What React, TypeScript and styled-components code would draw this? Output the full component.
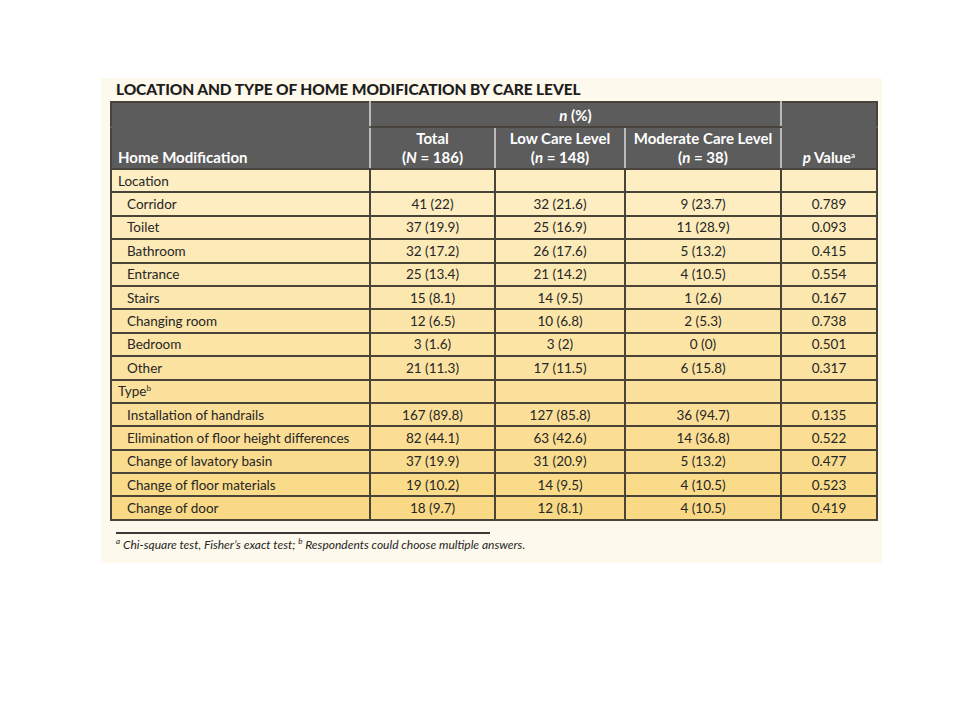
import React from "react";
import styled, { createGlobalStyle } from "styled-components";

const Global = createGlobalStyle`
  html, body { margin: 0; padding: 0; background: #ffffff; }
  body { font-family: "Lato", "Open Sans", sans-serif; }
`;

const Page = styled.div`
  width: 960px;
  height: 720px;
  padding: 78px 0 0 101px;
  box-sizing: border-box;
`;

const Panel = styled.div`
  width: 781px;
  height: 485px;
  background: #fdf9ec;
  box-sizing: border-box;
  padding: 2px 0 0 9px;
  display: flex;
  flex-direction: column;
`;

const Title = styled.div`
  font-family: "Lato", sans-serif;
  font-weight: 900;
  font-size: 15.5px;
  color: #1e1e1e;
  padding-left: 6px;
  height: 21px;
  line-height: 18px;
  letter-spacing: -0.1px;
  white-space: nowrap;
`;

const Table = styled.table`
  border-collapse: collapse;
  width: 766px;
  table-layout: fixed;
  font-family: "Lato", sans-serif;
  font-size: 13.5px;
  color: #262626;
`;

const HeadCell = styled.th<{ $align?: string; $sepRight?: boolean; $sepTop?: boolean }>`
  background: #5c5c5c;
  color: #ffffff;
  font-weight: 700;
  font-size: 15px;
  line-height: 19px;
  text-align: ${(p) => p.$align || "center"};
  vertical-align: bottom;
  padding: 0 6px 1px 6px;
  white-space: nowrap;
  border: 2px solid #48443d;
  ${(p) => (p.$sepRight ? "border-right: 2px solid #b9b9b9;" : "")}
  ${(p) => (p.$sepTop ? "border-top: 2px solid #b9b9b9;" : "")}
`;

const HeadRow = styled.tr<{ $h: number }>`
  height: ${(p) => p.$h}px;
`;

const BodyRow = styled.tr<{ $bg: string }>`
  height: 23.4px;
  background: ${(p) => p.$bg};
`;

const Cell = styled.td<{ $indent?: boolean; $left?: boolean }>`
  border: 2px solid #4a4438;
  padding: 0 6px;
  padding-left: ${(p) => (p.$indent ? "15px" : "6px")};
  text-align: ${(p) => (p.$left || p.$indent ? "left" : "center")};
  line-height: 18px;
  white-space: nowrap;
`;

const Footer = styled.div`
  margin-top: 11px;
  padding-left: 6px;
  display: flex;
  flex-direction: column;
`;

const Rule = styled.div`
  width: 374px;
  height: 2px;
  background: #3a3a3a;
`;

const Note = styled.div`
  margin-top: 3px;
  font-family: "Lato", sans-serif;
  font-style: italic;
  font-size: 12px;
  color: #262626;
  line-height: 15px;
  white-space: nowrap;
`;

const Sup = styled.sup`
  font-size: 8px;
  vertical-align: 5px;
  line-height: 0;
`;

type Row = { label: string; cells?: string[]; section?: boolean; sup?: string };

const rows: Row[] = [
  { label: "Location", section: true },
  { label: "Corridor", cells: ["41 (22)", "32 (21.6)", "9 (23.7)", "0.789"] },
  { label: "Toilet", cells: ["37 (19.9)", "25 (16.9)", "11 (28.9)", "0.093"] },
  { label: "Bathroom", cells: ["32 (17.2)", "26 (17.6)", "5 (13.2)", "0.415"] },
  { label: "Entrance", cells: ["25 (13.4)", "21 (14.2)", "4 (10.5)", "0.554"] },
  { label: "Stairs", cells: ["15 (8.1)", "14 (9.5)", "1 (2.6)", "0.167"] },
  { label: "Changing room", cells: ["12 (6.5)", "10 (6.8)", "2 (5.3)", "0.738"] },
  { label: "Bedroom", cells: ["3 (1.6)", "3 (2)", "0 (0)", "0.501"] },
  { label: "Other", cells: ["21 (11.3)", "17 (11.5)", "6 (15.8)", "0.317"] },
  { label: "Type", section: true, sup: "b" },
  { label: "Installation of handrails", cells: ["167 (89.8)", "127 (85.8)", "36 (94.7)", "0.135"] },
  { label: "Elimination of floor height differences", cells: ["82 (44.1)", "63 (42.6)", "14 (36.8)", "0.522"] },
  { label: "Change of lavatory basin", cells: ["37 (19.9)", "31 (20.9)", "5 (13.2)", "0.477"] },
  { label: "Change of floor materials", cells: ["19 (10.2)", "14 (9.5)", "4 (10.5)", "0.523"] },
  { label: "Change of door", cells: ["18 (9.7)", "12 (8.1)", "4 (10.5)", "0.419"] },
];

const mix = (t: number) => {
  const a = [253, 238, 196];
  const b = [250, 217, 134];
  const c = a.map((v, i) => Math.round(v + (b[i] - v) * t));
  return `rgb(${c[0]}, ${c[1]}, ${c[2]})`;
};

export default function App() {
  return (
    <>
      <Global />
      <Page>
        <Panel>
          <Title>LOCATION AND TYPE OF HOME MODIFICATION BY CARE LEVEL</Title>
          <Table>
            <colgroup>
              <col style={{ width: 259 }} />
              <col style={{ width: 125 }} />
              <col style={{ width: 130 }} />
              <col style={{ width: 156 }} />
              <col style={{ width: 96 }} />
            </colgroup>
            <thead>
              <HeadRow $h={25}>
                <HeadCell $sepRight style={{ borderBottomColor: "#5c5c5c" }} />
                <HeadCell colSpan={3} $sepRight>
                  <i>n</i> (%)
                </HeadCell>
                <HeadCell style={{ borderBottomColor: "#5c5c5c" }} />
              </HeadRow>
              <HeadRow $h={42}>
                <HeadCell $align="left" $sepRight style={{ borderTopColor: "#b9b9b9" }}>
                  Home Modification
                </HeadCell>
                <HeadCell $sepRight $sepTop>
                  Total
                  <br />(<i>N</i> = 186)
                </HeadCell>
                <HeadCell $sepRight $sepTop>
                  Low Care Level
                  <br />(<i>n</i> = 148)
                </HeadCell>
                <HeadCell $sepRight $sepTop>
                  Moderate Care Level
                  <br />(<i>n</i> = 38)
                </HeadCell>
                <HeadCell $sepTop>
                  <i>p</i> Value<Sup>a</Sup>
                </HeadCell>
              </HeadRow>
            </thead>
            <tbody>
              {rows.map((r, i) => (
                <BodyRow key={r.label} $bg={mix(i / (rows.length - 1))}>
                  <Cell $indent={!r.section} $left>
                    {r.label}
                    {r.sup && <Sup>{r.sup}</Sup>}
                  </Cell>
                  {(r.cells || ["", "", "", ""]).map((c, j) => (
                    <Cell key={j}>{c}</Cell>
                  ))}
                </BodyRow>
              ))}
            </tbody>
          </Table>
          <Footer>
            <Rule />
            <Note>
              <Sup>a</Sup> Chi-square test, Fisher’s exact test; <Sup>b</Sup> Respondents could choose multiple answers.
            </Note>
          </Footer>
        </Panel>
      </Page>
    </>
  );
}
